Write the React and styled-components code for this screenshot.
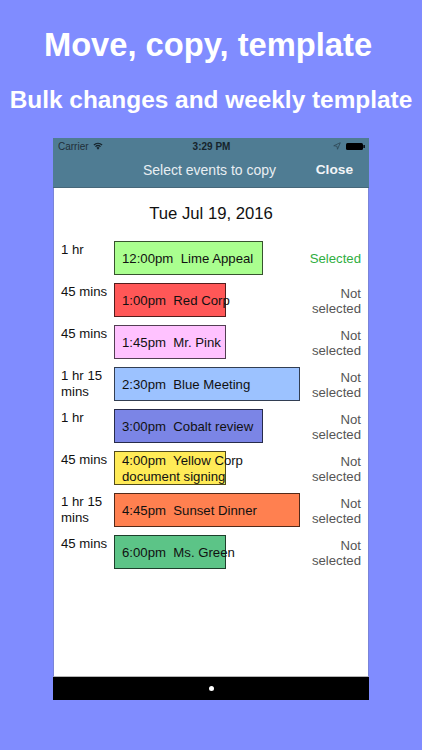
import React from 'react';
import styled, { createGlobalStyle } from 'styled-components';

const GlobalStyle = createGlobalStyle`
  html, body {
    margin: 0;
    padding: 0;
    background: #808cff;
    font-family: "Liberation Sans", Arial, sans-serif;
  }
`;

const Page = styled.div`
  width: 422px;
  height: 750px;
  overflow: hidden;
  display: flex;
  flex-direction: column;
  align-items: center;
  background: #808cff;
`;

const Headline = styled.h1`
  margin: 25px 6px 0 0;
  font-size: 32.7px;
  line-height: 40px;
  font-weight: 700;
  color: #fff;
  white-space: nowrap;
`;

const Subhead = styled.h2`
  margin: 21px 0 0;
  font-size: 24.4px;
  line-height: 28px;
  font-weight: 700;
  color: #fff;
  white-space: nowrap;
`;

const Phone = styled.div`
  margin-top: 24px;
  width: 316px;
  height: 562px;
  display: flex;
  flex-direction: column;
  background: #fff;
`;

const Header = styled.div`
  background: #4f7c93;
  height: 49px;
  border-bottom: 1px solid #47687a;
  box-sizing: content-box;
`;

const StatusBar = styled.div`
  height: 16px;
  display: grid;
  grid-template-columns: 1fr auto 1fr;
  align-items: center;
  padding: 0 4px 0 5px;
  font-size: 10px;
  color: #1f2f39;
`;

const StatusLeft = styled.div`
  display: flex;
  align-items: center;
  gap: 4px;
`;

const StatusTime = styled.div`
  font-weight: 700;
  color: #16242c;
`;

const StatusRight = styled.div`
  display: flex;
  align-items: center;
  justify-content: flex-end;
  gap: 5px;
`;

const NavBar = styled.div`
  height: 33px;
  position: relative;
  display: flex;
  align-items: center;
  justify-content: flex-end;
  padding-right: 16px;
  padding-bottom: 2px;
  box-sizing: border-box;
`;

const NavTitle = styled.div`
  position: absolute;
  left: 90px;
  font-size: 14px;
  color: #e8eef2;
`;

const CloseButton = styled.button`
  border: 0;
  padding: 0;
  background: none;
  font: 700 13.7px "Liberation Sans", Arial, sans-serif;
  color: #f2f5f7;
`;

const Content = styled.div`
  flex: 1;
  display: flex;
  flex-direction: column;
  border-left: 1px solid #7a84d8;
  border-right: 1px solid #7a84d8;
  border-bottom: 1px solid #b5b5b5;
`;

const DateLabel = styled.div`
  margin-top: 16px;
  text-align: center;
  font-size: 16.7px;
  line-height: 20px;
  color: #111;
`;

const List = styled.div`
  margin-top: 17px;
  display: flex;
  flex-direction: column;
  gap: 8px;
  padding: 0 7px;
`;

const Row = styled.div`
  height: 34px;
  display: flex;
  align-items: flex-start;
`;

const Duration = styled.div`
  width: 53px;
  flex: none;
  padding-top: 1px;
  font-size: 13.2px;
  line-height: 16px;
  color: #111;
`;

const EventBox = styled.div`
  width: ${(p) => p.$width}px;
  height: 34px;
  flex: none;
  box-sizing: border-box;
  display: flex;
  align-items: center;
  padding: 1px 0 0 7px;
  background: ${(p) => p.$color};
  border: 1px solid rgba(0, 0, 0, 0.68);
  font-size: 13.2px;
  line-height: 15.5px;
  color: #111;
  white-space: pre;
`;

const Spacer = styled.div`
  flex: 1;
`;

const Status = styled.div`
  width: 56px;
  flex: none;
  align-self: center;
  padding-top: 2px;
  text-align: right;
  font-size: 13.2px;
  line-height: 15.5px;
  color: ${(p) => (p.$selected ? '#2fae3f' : '#555')};
`;

const Footer = styled.div`
  height: 23px;
  flex: none;
  display: flex;
  align-items: center;
  justify-content: center;
  background: #000;
`;

const Dot = styled.div`
  width: 5px;
  height: 5px;
  border-radius: 50%;
  background: #fff;
`;

const events = [
  { duration: '1 hr', label: '12:00pm  Lime Appeal', width: 149, color: '#aaff8f', selected: true },
  { duration: '45 mins', label: '1:00pm  Red Corp', width: 112, color: '#ff5757' },
  { duration: '45 mins', label: '1:45pm  Mr. Pink', width: 112, color: '#ffc2ff' },
  { duration: '1 hr 15 mins', label: '2:30pm  Blue Meeting', width: 186, color: '#9cc2ff' },
  { duration: '1 hr', label: '3:00pm  Cobalt review', width: 149, color: '#7b85e6' },
  { duration: '45 mins', label: '4:00pm  Yellow Corp\ndocument signing', width: 112, color: '#ffeb57' },
  { duration: '1 hr 15 mins', label: '4:45pm  Sunset Dinner', width: 186, color: '#ff8050' },
  { duration: '45 mins', label: '6:00pm  Ms. Green', width: 112, color: '#5cc487' },
];

const WifiIcon = () => (
  <svg width="10" height="8" viewBox="0 0 22 16" fill="#16242c">
    <path d="M11 16 7.6 12a5 5 0 0 1 6.8 0z" />
    <path d="M6.2 10.4 4.4 8.4a10 10 0 0 1 13.2 0l-1.8 2a7.4 7.4 0 0 0-9.6 0z" />
    <path d="M3 6.8 1 4.6a15 15 0 0 1 20 0l-2 2.2a12 12 0 0 0-16 0z" />
  </svg>
);

const LocationIcon = () => (
  <svg width="8" height="8" viewBox="0 0 16 16" fill="none" stroke="#2d4654" strokeWidth="1.6">
    <path d="M14.5 1.5 1.5 7.5 8 8.5 9 14.5z" />
  </svg>
);

const BatteryIcon = () => (
  <svg width="19" height="7" viewBox="0 0 19 7">
    <rect x="0" y="0" width="17" height="7" rx="1.5" fill="#000" />
    <rect x="17.4" y="2" width="1.4" height="3" fill="#000" />
  </svg>
);

const App = () => (
  <Page>
    <GlobalStyle />
    <Headline>Move, copy, template</Headline>
    <Subhead>Bulk changes and weekly template</Subhead>
    <Phone>
      <Header>
        <StatusBar>
          <StatusLeft>
            Carrier
            <WifiIcon />
          </StatusLeft>
          <StatusTime>3:29 PM</StatusTime>
          <StatusRight>
            <LocationIcon />
            <BatteryIcon />
          </StatusRight>
        </StatusBar>
        <NavBar>
          <NavTitle>Select events to copy</NavTitle>
          <CloseButton>Close</CloseButton>
        </NavBar>
      </Header>
      <Content>
        <DateLabel>Tue Jul 19, 2016</DateLabel>
        <List>
          {events.map((e) => (
            <Row key={e.label}>
              <Duration>{e.duration}</Duration>
              <EventBox $width={e.width} $color={e.color}>{e.label}</EventBox>
              <Spacer />
              <Status $selected={e.selected}>{e.selected ? 'Selected' : 'Not selected'}</Status>
            </Row>
          ))}
        </List>
      </Content>
      <Footer>
        <Dot />
      </Footer>
    </Phone>
  </Page>
);

export default App;
